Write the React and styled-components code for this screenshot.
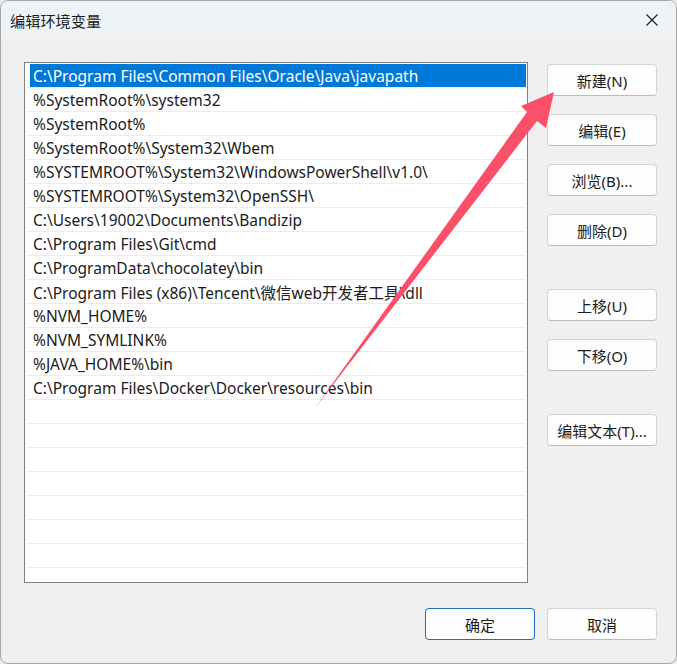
import React from 'react';
import styled, { createGlobalStyle } from 'styled-components';

const GlobalStyle = createGlobalStyle`
  html, body {
    margin: 0;
    padding: 0;
    background: #e9e9e9;
  }
  * {
    box-sizing: border-box;
  }
`;

const FONT = `"Noto Sans", "Noto Sans CJK SC", sans-serif`;

const Window = styled.div`
  position: relative;
  width: 677px;
  height: 664px;
  border: 1px solid #a8a8a8;
  border-radius: 8px;
  overflow: hidden;
  background: #f0f0f0;
  display: flex;
  flex-direction: column;
  font-family: ${FONT};
  color: #1b1b1b;
`;

const TitleBar = styled.div`
  height: 37px;
  flex: none;
  background: #eef3f8;
  display: flex;
  align-items: center;
  justify-content: space-between;
  padding: 0 0 0 9px;
  font-size: 15.2px;
`;

const CloseBtn = styled.div`
  width: 46px;
  height: 37px;
  display: flex;
  align-items: center;
  justify-content: center;
  margin-right: 1px;
`;

const Body = styled.div`
  flex: 1;
  display: flex;
  flex-direction: column;
  padding: 24px 19px 0 23px;
`;

const Main = styled.div`
  display: flex;
  align-items: flex-start;
`;

const ListBox = styled.div`
  width: 504px;
  height: 521px;
  border: 1px solid #7f7f7f;
  background: #ffffff;
  padding: 1px 1px 0 1px;
  overflow: hidden;
`;

const Row = styled.div`
  height: 24px;
  margin: 0 0 0 1px;
  border-bottom: 1px solid #ececec;
  display: flex;
  align-items: center;
  font-size: 15.5px;
  white-space: nowrap;
  > span {
    flex: 1;
    height: 23px;
    display: flex;
    align-items: center;
    padding-left: ${(p) => (p.selected ? '3px' : '6px')};
    padding-top: 1px;
    margin-left: ${(p) => (p.selected ? '3px' : '0')};
    background: ${(p) => (p.selected ? '#0078d7' : 'transparent')};
    color: ${(p) => (p.selected ? '#ffffff' : '#1b1b1b')};
  }
`;

const SideButtons = styled.div`
  margin-left: 19px;
  margin-top: 2px;
  width: 110px;
  display: flex;
  flex-direction: column;
`;

const Button = styled.button`
  width: 110px;
  height: 32px;
  flex: none;
  margin-top: ${(p) => p.gap || 0}px;
  background: #fdfdfd;
  border: 1px solid #d3d3d3;
  border-bottom-color: #bcbcbc;
  border-radius: 4px;
  font-family: ${FONT};
  font-size: 15px;
  color: #1b1b1b;
  padding: 0;
  display: flex;
  align-items: center;
  justify-content: center;
  ${(p) =>
    p.primary &&
    `
    border: 1px solid #1a6fc0;
    box-shadow: inset 0 0 0 1px #ffffff;
  `}
`;

const Footer = styled.div`
  display: flex;
  justify-content: flex-end;
  gap: 12px;
  margin-top: 25px;
`;

const ArrowLayer = styled.svg`
  position: absolute;
  left: -1px;
  top: -1px;
  width: 677px;
  height: 664px;
  pointer-events: none;
`;

const paths = [
  'C:\\Program Files\\Common Files\\Oracle\\Java\\javapath',
  '%SystemRoot%\\system32',
  '%SystemRoot%',
  '%SystemRoot%\\System32\\Wbem',
  '%SYSTEMROOT%\\System32\\WindowsPowerShell\\v1.0\\',
  '%SYSTEMROOT%\\System32\\OpenSSH\\',
  'C:\\Users\\19002\\Documents\\Bandizip',
  'C:\\Program Files\\Git\\cmd',
  'C:\\ProgramData\\chocolatey\\bin',
  'C:\\Program Files (x86)\\Tencent\\微信web开发者工具\\dll',
  '%NVM_HOME%',
  '%NVM_SYMLINK%',
  '%JAVA_HOME%\\bin',
  'C:\\Program Files\\Docker\\Docker\\resources\\bin',
];

const rows = [...paths, ...Array(8).fill('')];

const sideButtons = [
  { label: '新建(N)', gap: 0 },
  { label: '编辑(E)', gap: 18 },
  { label: '浏览(B)...', gap: 18 },
  { label: '删除(D)', gap: 18 },
  { label: '上移(U)', gap: 43 },
  { label: '下移(O)', gap: 18 },
  { label: '编辑文本(T)...', gap: 43 },
];

export default function App() {
  return (
    <>
      <GlobalStyle />
      <Window>
        <TitleBar>
          <span>编辑环境变量</span>
          <CloseBtn>
            <svg width="12" height="12" viewBox="0 0 12 12">
              <path d="M0.5 0.5 L11.5 11.5 M11.5 0.5 L0.5 11.5" stroke="#1b1b1b" strokeWidth="1.1" />
            </svg>
          </CloseBtn>
        </TitleBar>
        <Body>
          <Main>
            <ListBox>
              {rows.map((text, i) => (
                <Row key={i} selected={i === 0}>
                  <span>{text}</span>
                </Row>
              ))}
            </ListBox>
            <SideButtons>
              {sideButtons.map((b) => (
                <Button key={b.label} gap={b.gap}>
                  {b.label}
                </Button>
              ))}
            </SideButtons>
          </Main>
          <Footer>
            <Button primary>确定</Button>
            <Button>取消</Button>
          </Footer>
        </Body>
        {/* red annotation arrow drawn over the dialog */}
        <ArrowLayer viewBox="0 0 677 664">
          <polygon
            points="315,408 527,112 521,106 554,92 546,128 537,121"
            fill="#fa5069"
          />
        </ArrowLayer>
      </Window>
    </>
  );
}
